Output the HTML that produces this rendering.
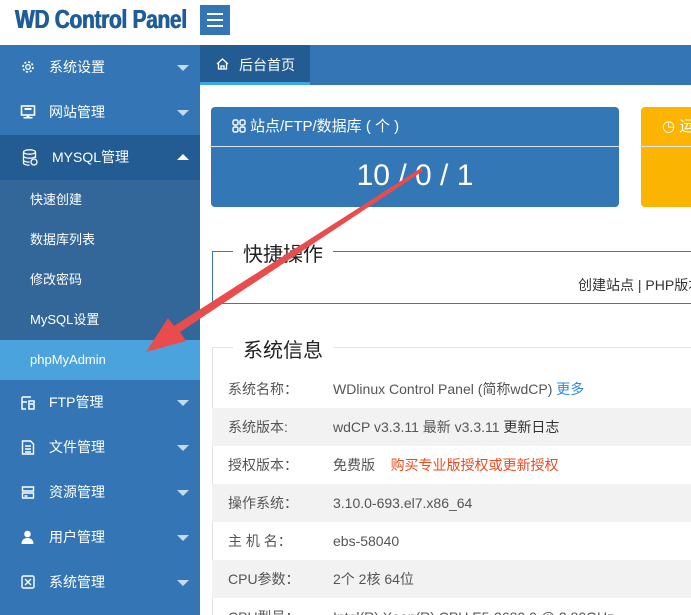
<!DOCTYPE html>
<html><head><meta charset="utf-8"><style>
*{margin:0;padding:0;box-sizing:border-box}
html,body{width:691px;height:615px;overflow:hidden}
body{background:#fff;font-family:"Liberation Sans","Noto Sans CJK SC",sans-serif;position:relative}
.hdr{position:absolute;left:0;top:0;width:691px;height:45px;background:#fff}
.logo{position:absolute;left:15px;top:4px;font-family:"Liberation Sans",sans-serif;font-weight:bold;font-size:26px;color:#1f5c9a;letter-spacing:-0.3px;transform:scaleX(0.8);transform-origin:left;text-shadow:0.6px 0 0 #1f5c9a,-0.4px 0 0 #1f5c9a;white-space:nowrap}
.burger{position:absolute;left:200px;top:5px;width:30px;height:30px;background:#3476b5}
.burger i{position:absolute;left:7px;width:16px;height:2px;background:#fff}
.side{position:absolute;left:0;top:45px;width:200px;height:570px;background:#3476b5}
.mi{position:absolute;left:0;width:200px;height:45px;color:#fff;font-size:14px;line-height:45px}
.mi .ic{position:absolute;left:20px;top:0;width:16px;color:#fff}
.mi .t{position:absolute;left:49px}
.mi .ar{position:absolute;left:177px;top:20px;width:0;height:0;border-left:6px solid transparent;border-right:6px solid transparent;border-top:6px solid #c5daee}
.sub{position:absolute;left:0;width:200px;height:40px;line-height:40px;color:#fff;font-size:13px;padding-left:30px;background:#33679a}
.tabs{position:absolute;left:200px;top:45px;width:491px;height:40px;background:#3476b5}
.tab{position:absolute;left:0;top:0;width:110px;height:40px;background:#235c93;border-bottom:3px solid #3ea8e6;color:#fff;font-size:14px;line-height:40px;padding-left:39px}
.card{position:absolute;top:107px;height:100px;border-radius:4px;color:#fff;overflow:hidden}
.card .h{height:40px;border-bottom:1px solid #d8e6f3;font-size:15px;line-height:40px;padding-left:21px;white-space:nowrap}
.fs{position:absolute;left:212px;width:479px}
.lg{position:absolute;background:#fff;padding:0 10px;font-size:20px;color:#222}
.row{position:absolute;left:212px;width:479px;height:38px;font-size:14px;color:#555;line-height:38px;overflow:hidden}
.row .l{position:absolute;left:16px}
.row .v{position:absolute;left:121px;white-space:nowrap}
.g{background:#f2f2f2}
</style></head><body>
<div class="hdr"><div class="logo">WD Control Panel</div>
<div class="burger"><i style="top:8px"></i><i style="top:14px"></i><i style="top:20px"></i></div></div>
<div class="side">
<div class="mi" style="top:0"><svg class="ic" style="top:15px" width="14" height="14" viewBox="0 0 14 14"><circle cx="7" cy="7" r="2.3" fill="none" stroke="#fff" stroke-width="1.3"/><circle cx="7" cy="7" r="5" fill="none" stroke="#fff" stroke-width="1.6" stroke-dasharray="2.2 1.7"/></svg><span class="t">系统设置</span><i class="ar"></i></div>
<div class="mi" style="top:45px"><svg class="ic" style="top:15px" width="15" height="14" viewBox="0 0 15 14"><rect x="1" y="1" width="13" height="9" fill="none" stroke="#fff" stroke-width="1.6"/><rect x="4" y="3" width="7" height="2" fill="#fff"/><rect x="6" y="10" width="3" height="2" fill="#fff"/><rect x="3" y="12" width="9" height="1.5" fill="#fff"/></svg><span class="t">网站管理</span><i class="ar"></i></div>
<div class="mi" style="top:90px;background:#235c93"><svg class="ic" style="top:14px;left:22px" width="15" height="17" viewBox="0 0 15 17"><ellipse cx="7" cy="3" rx="6" ry="2.2" fill="none" stroke="#fff" stroke-width="1.3"/><path d="M1 3v11c0 1.2 2.7 2.2 6 2.2M13 3v6M1 7c0 1.2 2.7 2.2 6 2.2s6-1 6-2.2M1 11c0 1.2 2.7 2.2 6 2.2" fill="none" stroke="#fff" stroke-width="1.3"/><circle cx="11.5" cy="13" r="3" fill="none" stroke="#fff" stroke-width="1.3"/></svg><span class="t" style="left:52px">MYSQL管理</span><i class="ar" style="border-top:0;border-bottom:6px solid #fff;top:19px"></i></div>
<div class="sub" style="top:135px">快速创建</div>
<div class="sub" style="top:175px">数据库列表</div>
<div class="sub" style="top:215px">修改密码</div>
<div class="sub" style="top:255px">MySQL设置</div>
<div class="sub" style="top:295px;background:#4aa3dc">phpMyAdmin</div>
<div class="mi" style="top:335px"><svg class="ic" style="top:16px" width="14" height="14" viewBox="0 0 14 14"><path d="M1 1h9M1 1v12h4M1 6h5M8 5h5v8H8zM9 8h3" fill="none" stroke="#fff" stroke-width="1.5"/></svg><span class="t">FTP管理</span><i class="ar"></i></div>
<div class="mi" style="top:380px"><svg class="ic" style="top:15px" width="13" height="15" viewBox="0 0 13 15"><path d="M1 1h8l3 3v10H1z M3.5 6h6M3.5 9h6M3.5 12h6" fill="none" stroke="#fff" stroke-width="1.4"/></svg><span class="t">文件管理</span><i class="ar"></i></div>
<div class="mi" style="top:425px"><svg class="ic" style="top:16px" width="13" height="13" viewBox="0 0 13 13"><path d="M1 1h11v4H1zM1 7h11v5H1zM3 10h3" fill="none" stroke="#fff" stroke-width="1.4"/></svg><span class="t">资源管理</span><i class="ar"></i></div>
<div class="mi" style="top:470px"><svg class="ic" style="top:15px" width="13" height="15" viewBox="0 0 13 15"><circle cx="6" cy="4" r="3.3" fill="#fff"/><path d="M0 14c0-4 2.5-6 6-6s6 2 6 6z" fill="#fff"/></svg><span class="t">用户管理</span><i class="ar"></i></div>
<div class="mi" style="top:515px"><svg class="ic" style="top:15px" width="14" height="14" viewBox="0 0 14 14"><rect x="1" y="1" width="12" height="12" rx="1.5" fill="none" stroke="#fff" stroke-width="1.4"/><path d="M4 4l6 6M10 4l-6 6" stroke="#fff" stroke-width="1.4"/></svg><span class="t">系统管理</span><i class="ar"></i></div>
</div>
<div class="tabs"><div class="tab"><svg style="position:absolute;left:16px;top:13px" width="13" height="12" viewBox="0 0 13 12"><path d="M1 6L6.5 1 12 6M2.5 5v6h8V5M5 11V8h3v3" fill="none" stroke="#fff" stroke-width="1.3"/></svg>后台首页</div></div>
<div class="card" style="left:211px;width:408px;background:#3477b6"><div class="h"><svg style="vertical-align:-2px;margin-right:4px" width="14" height="14" viewBox="0 0 14 14"><g fill="none" stroke="#fff" stroke-width="1.4"><rect x="1" y="1" width="5" height="5" rx="1.5"/><rect x="8" y="1" width="5" height="5" rx="1.5"/><rect x="1" y="8" width="5" height="5" rx="1.5"/><rect x="8" y="8" width="5" height="5" rx="1.5"/></g></svg>站点/FTP/数据库 ( 个 )</div><div style="text-align:center;font-size:30px;line-height:58px">10 / 0 / 1</div></div>
<div class="card" style="left:641px;width:50px;background:#fbb500;border-radius:4px 0 0 4px"><div class="h">◷ 运</div></div>
<div class="fs" style="top:251px;height:53px;border:1px solid #3a76b3;border-right:0"></div>
<div class="lg" style="left:233px;top:238px">快捷操作</div>
<div style="position:absolute;left:578px;top:275px;width:113px;overflow:hidden;font-size:14px;color:#333;white-space:nowrap">创建站点 | PHP版本</div>
<div class="fs" style="top:347px;height:268px;border-top:1px solid #e2e2e2;border-left:1px solid #e2e2e2"></div>
<div class="lg" style="left:233px;top:334px">系统信息</div>
<div class="row" style="top:370px"><span class="l">系统名称：</span><span class="v">WDlinux Control Panel (简称wdCP) <span style="color:#2a8ae6">更多</span></span></div>
<div class="row g" style="top:408px"><span class="l">系统版本:</span><span class="v">wdCP v3.3.11 最新 v3.3.11 <span style="color:#333">更新日志</span></span></div>
<div class="row" style="top:446px"><span class="l">授权版本：</span><span class="v">免费版 &nbsp; &nbsp;<span style="color:#f24a1d">购买专业版授权或更新授权</span></span></div>
<div class="row g" style="top:484px"><span class="l">操作系统：</span><span class="v">3.10.0-693.el7.x86_64</span></div>
<div class="row" style="top:522px"><span class="l">主 机 名：</span><span class="v">ebs-58040</span></div>
<div class="row g" style="top:560px"><span class="l">CPU参数：</span><span class="v">2个 2核 64位</span></div>
<div class="row" style="top:598px;height:17px"><span class="l">CPU型号：</span><span class="v">Intel(R) Xeon(R) CPU E5-2680 0 @ 2.80GHz</span></div>
<svg style="position:absolute;left:0;top:0" width="691" height="615"><polygon points="421,168 423,171 180,332 186,341 146,352 168,318 174,326" fill="#e84c4c"/></svg>
</body></html>
